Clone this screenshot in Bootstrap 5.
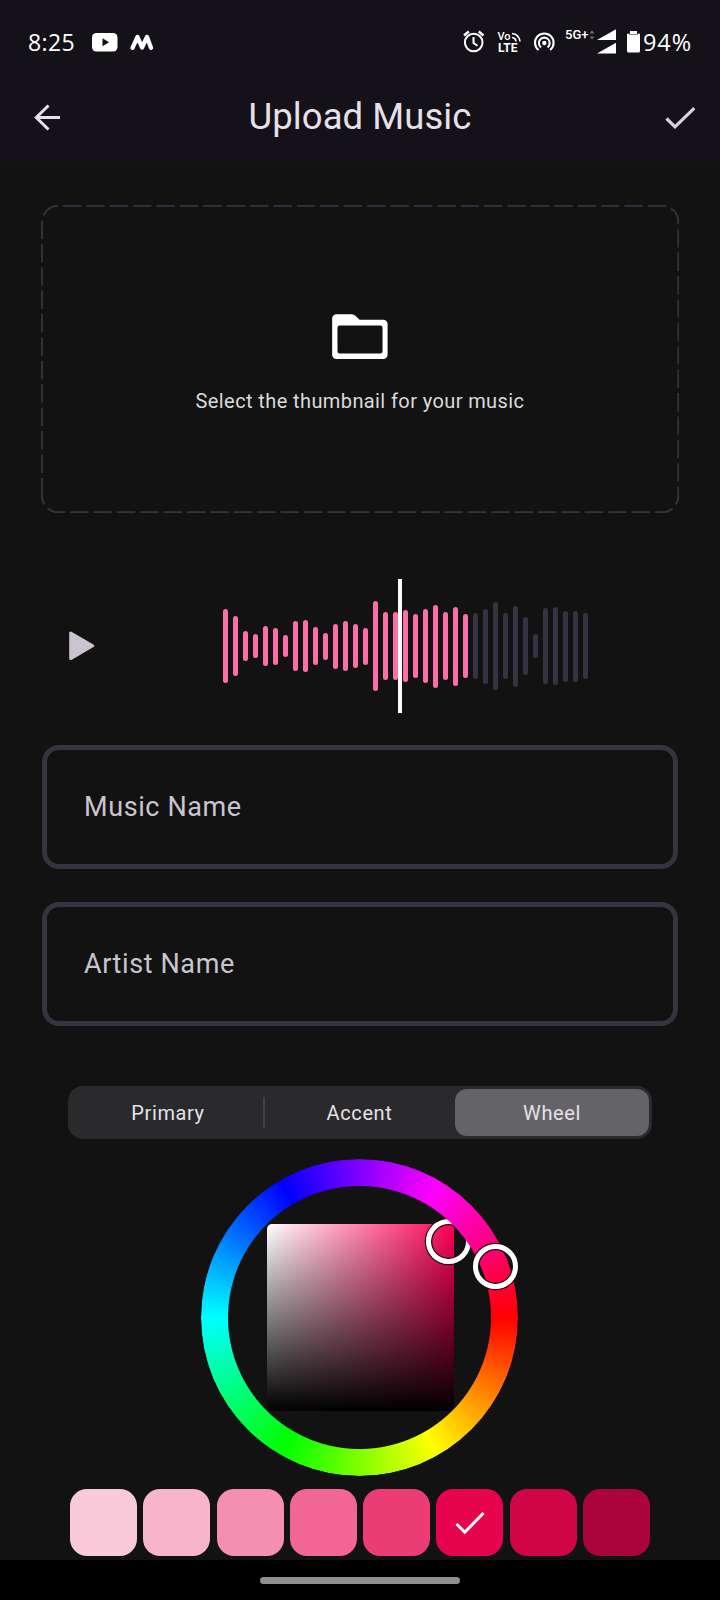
<!DOCTYPE html>
<html lang="en">
<head>
<meta charset="utf-8">
<meta name="viewport" content="width=device-width, initial-scale=1">
<title>Upload Music</title>
<link href="https://cdn.jsdelivr.net/npm/bootstrap@5.3.0/dist/css/bootstrap.min.css" rel="stylesheet">
<style>
body{background:#121212;color:#e6e0e9;font-family:Roboto,"Liberation Sans",sans-serif;width:720px;height:1600px;overflow:hidden}
svg{display:block;flex:none}
.top-area{background:#141118;height:163px}
.status{height:84px;padding:28px 29px 0 28px;color:#fff;font:500 23px/28px "Open Sans",sans-serif}
.clock{width:63px;letter-spacing:.4px}
.charge{letter-spacing:.9px;margin-right:-1px;margin-left:1px;font-size:23.500px}
.app-bar{height:66px;padding:0 22px 0 30px}
.app-title{font-size:36.500px;line-height:44px;letter-spacing:.05px;font-weight:400}
.drop-zone{height:308px;margin:42px 41px 0}
.drop-zone .frame{left:0;top:0}
.drop-zone .folder{margin-top:98px}
.hint{font-size:20px;line-height:24px;letter-spacing:.4px;color:#dcdadd;margin-top:19px}
.player{height:134px;margin-top:66px;padding-left:68.500px}
.wave{margin-left:128.500px;gap:5px;height:134px}
.wave i{width:5px;border-radius:3px;background:#353341}
.wave i.played{background:#fb6ea8}
.cursor{width:4px;height:134px;background:#fff;left:175px;top:0}
.field{height:124px;border:5px solid #353341;border-radius:17px;padding:0 37px;background:transparent;color:#cac4d0;font-size:27px;line-height:32px;letter-spacing:.6px}
.fields{margin:32px 42px 0;gap:33px}
.segments{height:53px;margin:60px 68px 0;background:#2a292b;border-radius:15px;padding:3px 3px 3px 4px}
.segments .btn{border:0;border-radius:12px;color:#e6e0e9;font-size:20px;line-height:24px;letter-spacing:.6px;padding:0}
.segments .btn.active{background:#646367;color:#e6e0e9}
.seg-primary{width:192px}
.seg-wheel{width:194px}
.rule{width:2px;height:31px;background:#434246;margin:0 -1px}
.wheel{width:317px;height:317px;margin:20px 0 0 201px}
.sv{left:66px;top:65px;width:186.500px;height:186.500px;border-radius:5px;background:linear-gradient(to bottom,transparent,#000),linear-gradient(to right,#fff,#ff0057)}
.hue{inset:0;border-radius:50%;background:conic-gradient(from 90deg,#f00,#ff0,#0f0,#0ff,#00f,#f0f,#f00);-webkit-mask:radial-gradient(closest-side,transparent 131px,#000 132px);mask:radial-gradient(closest-side,transparent 131px,#000 132px)}
.knob{width:45px;height:45px;border:5.500px solid #fff;border-radius:50%;box-shadow:0 0 0 1.300px #111,inset 0 0 0 1.300px #111}
.swatches{margin:13px 70px 0;gap:6.400px;height:67px}
.swatches span{flex:1;border-radius:17px}
.nav-area{background:#000;height:40px;margin-top:4px}
.pill{width:200px;height:7px;border-radius:4px;background:#8f8f8f}
</style>
</head>
<body>
<header class="top-area">
  <div class="status d-flex align-items-start">
    <span class="clock">8:25</span>
    <svg width="64" height="28" viewBox="91 28 64 28"><rect x="92" y="33" width="25.500" height="18.500" rx="4.500" fill="#fff"/><path d="M102.500 38.300v8l6.500-4z" fill="#141118"/><path d="M132.500 47.800 137.500 37l4.500 10.500 5-10.500 4 10.800" fill="none" stroke="#fff" stroke-width="4.300" stroke-linejoin="round" stroke-linecap="round"/></svg>
    <svg class="ms-auto" width="180" height="28" viewBox="462 28 180 28" fill="none" stroke="#fff">
      <circle cx="473.700" cy="42.500" r="8.800" stroke-width="2"/><path d="M473.500 37v6l4 2.800" stroke-width="2"/><path d="m464 35.500 4.800-4M483.500 35.500l-4.800-4" stroke-width="2.300"/>
      <g fill="#fff" stroke="none" font-family="Roboto"><text x="497.500" y="40.300" font-size="11" font-weight="500">Vo</text><text x="498" y="51.500" font-size="12" font-weight="700" textLength="19.500">LTE</text><text x="565" y="39.300" font-size="13" font-weight="500" textLength="23.500">5G+</text></g>
      <path d="M512 37.500q3.500.3 4 4M512 33.500q7 .8 8 8" stroke-width="1.700"/>
      <circle cx="544.300" cy="43" r="2.200" fill="#fff" stroke="none"/><path d="M541 47.300a5.400 5.400 0 1 1 6.600 0M538.500 50a9.300 9.300 0 1 1 11.600 0" stroke-width="2.100"/>
      <path d="m590.500 33.500 1.500-2 1.500 2M590.500 36.500l1.500 2 1.500-2" stroke="#77757a" stroke-width="1.300"/>
      <path d="M616 29.300V40h-19zM616 42.800V53.500h-19z" fill="#fff" stroke="none"/>
      <path d="M627 33.800h13V51q0 1.500-1.500 1.500h-10q-1.500 0-1.500-1.500zM630 31h7v2.800h-7z" fill="#fff" stroke="none"/><path d="M629 34.500h9" stroke="#888" stroke-width="1"/>
    </svg>
    <span class="charge">94%</span>
  </div>
  <div class="app-bar d-flex align-items-center justify-content-between">
    <svg width="34" height="34" viewBox="30 100 34 34" fill="none" stroke="#e6e0e9" stroke-width="3"><path d="M60 117.500H36M48.500 105.500 36.300 117.500l12.200 12"/></svg>
    <h1 class="app-title my-0 ms-0 me-2">Upload Music</h1>
    <svg width="34" height="34" viewBox="664 100 34 34" fill="none" stroke="#d8d2dc" stroke-width="3.200"><path d="m666.500 118.500 8.500 8.300 19.300-18.600"/></svg>
  </div>
</header>

<main>
  <section class="drop-zone position-relative d-flex flex-column align-items-center">
    <svg class="frame position-absolute" width="638" height="308" viewBox="41 205 638 308"><path d="M42 496.300V222a16.500 16.500 0 0 1 16.500-16.300h403.300H662a16.300 16.300 0 0 1 16.300 16.300V496a16.300 16.300 0 0 1-16.300 16.300H58A16 16 0 0 1 42 496.300" fill="none" stroke="#353341" stroke-width="1.900" stroke-dasharray="18.400 5"/></svg>
    <svg class="folder" width="67.200" height="67.200" viewBox="0 0 24 24" fill="#fff"><path fill-rule="evenodd" d="M20 6h-8l-1.400-1.400A2 2 0 0 0 9.200 4H3.700A1.500 1.500 0 0 0 2.200 5.500v13A1.500 1.500 0 0 0 3.700 20h16.800a1.500 1.500 0 0 0 1.500-1.500v-11A1.500 1.500 0 0 0 20.500 6zM19.400 18H4.900a.8.8 0 0 1-.8-.8V8.800a.8.8 0 0 1 .8-.8h14.500a.8.8 0 0 1 .8.8v8.400a.8.8 0 0 1-.8.8z"/></svg>
    <p class="hint mb-0">Select the thumbnail for your music</p>
  </section>

  <section class="player d-flex align-items-center">
    <svg width="26" height="30" viewBox="0 0 26 30"><path d="M1.700 2v25.600L23.700 14.800z" fill="#cac4d0" stroke="#cac4d0" stroke-width="3" stroke-linejoin="round"/></svg>
    <div class="wave position-relative d-flex align-items-center" id="wave"><div class="cursor position-absolute"></div></div>
  </section>

  <section class="fields d-flex flex-column">
    <div class="field d-flex align-items-center">Music Name</div>
    <div class="field d-flex align-items-center">Artist Name</div>
  </section>

  <div class="segments d-flex align-items-center">
    <button class="btn h-100 seg-primary">Primary</button>
    <span class="rule"></span>
    <button class="btn h-100 flex-fill">Accent</button>
    <button class="btn h-100 seg-wheel active">Wheel</button>
  </div>

  <div class="wheel position-relative">
    <div class="sv position-absolute"></div>
    <div class="knob position-absolute" style="left:225px;top:60px"></div>
    <div class="hue position-absolute"></div>
    <div class="knob position-absolute" style="left:272px;top:84.500px"></div>
  </div>

  <div class="swatches d-flex" id="swatches"></div>
</main>

<footer class="nav-area d-flex align-items-center justify-content-center"><div class="pill"></div></footer>

<script src="https://cdn.jsdelivr.net/npm/bootstrap@5.3.0/dist/js/bootstrap.bundle.min.js"></script>
<script>
const levels=[74,60,30,24.5,40,37,22,50.5,52.5,38.5,27,45,50.5,43.5,37,89.5,68,68,72,64,74.5,83,67.5,79,64,66,75,87.5,66,81,57.5,23.5,76,77.5,71,71,66];
document.getElementById('wave').insertAdjacentHTML('afterbegin',levels.map((h,i)=>`<i class="${i<25?'played':''}" style="height:${h}px"></i>`).join(''));
const shades=['#f9cad9','#f7b5cb','#f48fb1','#f16694','#ec3c76','#e6044f','#d00548','#ab033b'];
const tick='<svg width="32" height="26" viewBox="0 0 32 26" fill="none" stroke="#fff" stroke-width="3"><path d="m2.500 14 8.300 8.200L29.500 3"/></svg>';
document.getElementById('swatches').innerHTML=shades.map((c,i)=>`<span class="d-flex align-items-center justify-content-center" style="background:${c}">${i===5?tick:''}</span>`).join('');
</script>
</body>
</html>
